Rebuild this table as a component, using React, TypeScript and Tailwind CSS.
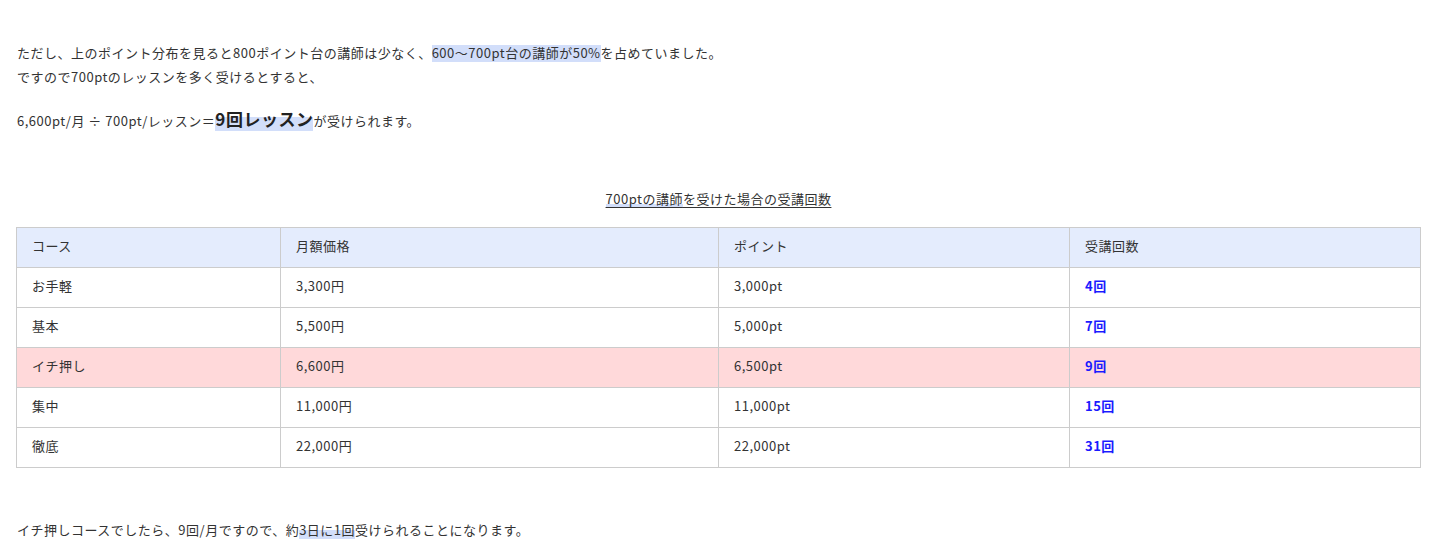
import React from "react";

const font = { fontFamily: '"Noto Sans CJK JP", "Noto Sans", sans-serif' };

const rows = [
  { c: "お手軽", p: "3,300円", pt: "3,000pt", n: "4回", hl: false },
  { c: "基本", p: "5,500円", pt: "5,000pt", n: "7回", hl: false },
  { c: "イチ押し", p: "6,600円", pt: "6,500pt", n: "9回", hl: true },
  { c: "集中", p: "11,000円", pt: "11,000pt", n: "15回", hl: false },
  { c: "徹底", p: "22,000円", pt: "22,000pt", n: "31回", hl: false },
];

export default function App() {
  return (
    <div className="w-[1432px] h-[552px] bg-white text-[#333] text-[13px] tracking-[0.5px] overflow-hidden" style={font}>
      <div className="pl-[17px] pr-[12px] pt-[41px]">
        <p className="leading-[24px]">
          ただし、上のポイント分布を見ると800ポイント台の講師は少なく、
          <span className="bg-[linear-gradient(transparent_8%,#d2defa_8%)]">600〜700pt台の講師が50%</span>
          を占めていました。
          <br />
          ですので700ptのレッスンを多く受けるとすると、
        </p>
        <p className="mt-[18px] leading-[24px]">
          6,600pt/月 ÷ 700pt/レッスン＝
          <span className="text-[17px] font-bold text-[#222] bg-[linear-gradient(transparent_45%,#d2defa_45%)]">9回レッスン</span>
          が受けられます。
        </p>
        <div className="mt-[54px] text-center leading-[24px]">
          <span className="underline underline-offset-[3px]">
            <span className="bg-[linear-gradient(transparent_80%,#d2defa_80%)]">700ptの講師</span>を受けた場合の受講回数
          </span>
        </div>
      </div>
      <div className="px-[16px] mt-[16px]">
        <table className="w-[1404px] border-collapse table-fixed">
          <colgroup>
            <col className="w-[264px]" />
            <col className="w-[438px]" />
            <col className="w-[351px]" />
            <col className="w-[351px]" />
          </colgroup>
          <thead>
            <tr className="bg-[#e4ecfd] h-[40px]">
              {["コース", "月額価格", "ポイント", "受講回数"].map((h) => (
                <th key={h} className="border border-[#cccccc] text-left font-normal px-[15px] pt-0 pb-[4px]">
                  {h}
                </th>
              ))}
            </tr>
          </thead>
          <tbody>
            {rows.map((r) => (
              <tr key={r.c} className={r.hl ? "bg-[#ffd9da] h-[40px]" : "h-[40px]"}>
                <td className="border border-[#cccccc] px-[15px] pb-[4px]">{r.c}</td>
                <td className="border border-[#cccccc] px-[15px] pb-[4px]">{r.p}</td>
                <td className="border border-[#cccccc] px-[15px] pb-[4px]">{r.pt}</td>
                <td className="border border-[#cccccc] px-[15px] pb-[4px] font-bold text-[#1a1aff]">{r.n}</td>
              </tr>
            ))}
          </tbody>
        </table>
      </div>
      <p className="pl-[17px] mt-[50px] leading-[24px]">
        イチ押しコースでしたら、9回/月ですので、約
        <span className="bg-[linear-gradient(transparent_55%,#d2defa_55%)]">3日に1回</span>
        受けられることになります。
      </p>
    </div>
  );
}
